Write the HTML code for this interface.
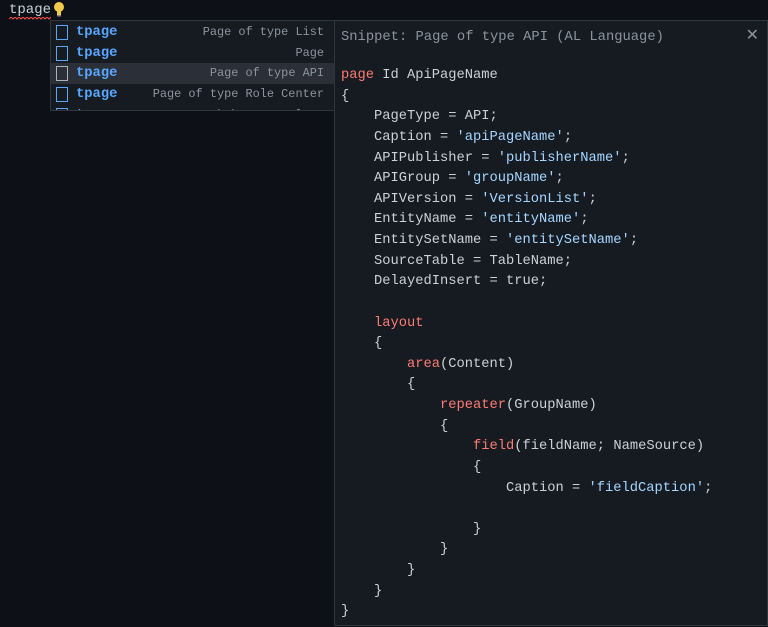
<!DOCTYPE html>
<html><head><style>
body{margin:0;width:768px;height:627px;background:#0d1117;overflow:hidden;position:relative;font-family:"Liberation Mono",monospace;}
.t{position:absolute;left:9px;top:0px;color:#c9d1d9;font-size:14px;line-height:20px;}
.wavy{position:absolute;left:9px;top:17px;width:42px;height:3px;}
.bulb{position:absolute;left:52px;top:1px;}
.list{position:absolute;left:50px;top:20px;width:284px;height:91px;background:#161b22;border:1px solid #30363d;border-right:none;overflow:hidden;box-sizing:border-box;padding-top:1px;}
.row{position:relative;height:20.7px;font-size:13.8px;line-height:20.7px;}
.row.sel{background:#2b3038;}
.ic{position:absolute;left:5px;top:3px;width:12px;height:15px;border:1.3px solid #58a6ff;box-sizing:border-box;}
.sel .ic{border-color:#aab1ba;}
.nm{position:absolute;left:25px;top:1px;color:#58a6ff;font-weight:bold;}
.ds{position:absolute;right:10px;top:0px;color:#8b949e;font-size:11.9px;}
.panel{position:absolute;left:334px;top:20px;width:434px;height:606px;background:#161b22;border:1px solid #30363d;box-sizing:border-box;}
.title{position:absolute;left:6px;top:7px;color:#8b949e;font-size:13.8px;line-height:20px;}
.x{position:absolute;right:8px;top:4px;color:#8b949e;font-size:16px;font-family:"Liberation Sans",sans-serif;}
pre{position:absolute;left:6px;top:45px;margin:0;color:#c9d1d9;font-family:"Liberation Mono",monospace;font-size:13.75px;line-height:20.62px;}
.k{color:#ff7b72}.s{color:#a5d6ff}
</style></head><body>
<div class="t">tpage</div>
<svg class="wavy" viewBox="0 0 42 3"><path d="M0 2 L2 0 L4 2 L6 0 L8 2 L10 0 L12 2 L14 0 L16 2 L18 0 L20 2 L22 0 L24 2 L26 0 L28 2 L30 0 L32 2 L34 0 L36 2 L38 0 L40 2 L42 0" stroke="#f85149" fill="none" stroke-width="1"/></svg>
<svg class="bulb" width="14" height="16" viewBox="0 0 14 16"><circle cx="7" cy="6" r="5" fill="#f2c94c"/><rect x="5" y="10" width="4" height="4" fill="#f2c94c"/><rect x="5" y="14" width="4" height="1.5" fill="#888"/></svg>
<div class="list">
<div class="row"><span class="ic"></span><span class="nm">tpage</span><span class="ds">Page of type List</span></div>
<div class="row"><span class="ic"></span><span class="nm">tpage</span><span class="ds">Page</span></div>
<div class="row sel"><span class="ic"></span><span class="nm">tpage</span><span class="ds">Page of type API</span></div>
<div class="row"><span class="ic"></span><span class="nm">tpage</span><span class="ds">Page of type Role Center</span></div>
<div class="row"><span class="ic"></span><span class="nm">tpage</span><span class="ds">Worksheet Template</span></div>
</div>
<div class="panel">
<div class="title">Snippet: Page of type API (AL Language)</div>
<div class="x">✕</div>
<pre><span class="k">page</span> Id ApiPageName
{
    PageType = API;
    Caption = <span class="s">'apiPageName'</span>;
    APIPublisher = <span class="s">'publisherName'</span>;
    APIGroup = <span class="s">'groupName'</span>;
    APIVersion = <span class="s">'VersionList'</span>;
    EntityName = <span class="s">'entityName'</span>;
    EntitySetName = <span class="s">'entitySetName'</span>;
    SourceTable = TableName;
    DelayedInsert = true;

    <span class="k">layout</span>
    {
        <span class="k">area</span>(Content)
        {
            <span class="k">repeater</span>(GroupName)
            {
                <span class="k">field</span>(fieldName; NameSource)
                {
                    Caption = <span class="s">'fieldCaption'</span>;

                }
            }
        }
    }
}</pre>
</div>
</body></html>
